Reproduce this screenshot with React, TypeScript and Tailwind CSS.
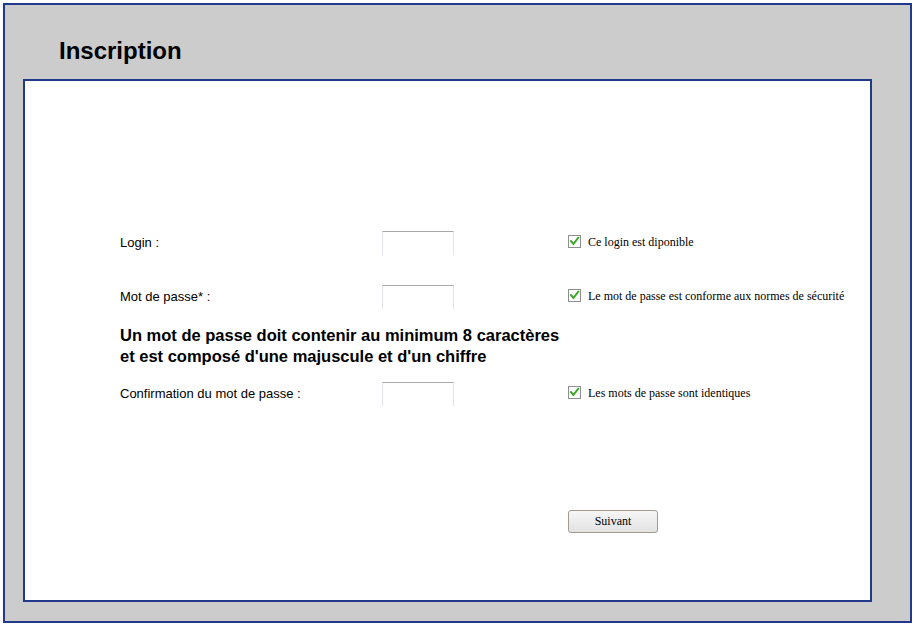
import React from 'react';

const sans = { fontFamily: '"Liberation Sans", Arial, sans-serif' };
const serif = { fontFamily: '"Liberation Serif", "Times New Roman", serif' };

function Check() {
  return (
    <svg width="13" height="13" viewBox="0 0 13 13" className="shrink-0">
      <rect x="0.5" y="0.5" width="12" height="12" fill="#fbfbfb" stroke="#8e8f8f" />
      <path d="M3 6.2 L5.4 9 L10.2 2.8" fill="none" stroke="#3aa826" strokeWidth="2" strokeLinecap="square" />
    </svg>
  );
}

function Field() {
  return <div className="h-[24px] w-[72px] border-x border-t border-x-[#e2e3ea] border-t-[#a9a9a9] bg-white" />;
}

function Row({ label, status }: { label: string; status: string }) {
  return (
    <div className="grid grid-cols-[262px_186px_1fr] items-center">
      <span className="text-[13px] text-black" style={sans}>{label}</span>
      <Field />
      <div className="flex items-center gap-[7px] -mt-[3px]">
        <Check />
        <span className="text-[12px] text-black" style={serif}>{status}</span>
      </div>
    </div>
  );
}

export default function App() {
  return (
    <div className="p-[3px]">
      <div className="w-[909px] h-[620px] border-2 border-[#22388a] bg-[#cccccc] pl-[18px]">
        <h1 className="pl-[36px] pt-[32px] pb-[14px] text-[24px] leading-[28px] font-bold text-black" style={sans}>
          Inscription
        </h1>
        <div className="w-[849px] h-[523px] border-2 border-[#22388a] bg-white pl-[95px] pt-[150px]">
          <Row label="Login :" status="Ce login est diponible" />
          <div className="mt-[30px]">
            <Row label="Mot de passe* :" status="Le mot de passe est conforme aux normes de sécurité" />
          </div>
          <p className="mt-[16px] text-[16.5px] leading-[21px] font-bold text-black" style={sans}>
            Un mot de passe doit contenir au minimum 8 caractères
            <br />
            et est composé d'une majuscule et d'un chiffre
          </p>
          <div className="mt-[15px]">
            <Row label="Confirmation du mot de passe :" status="Les mots de passe sont identiques" />
          </div>
          <div className="mt-[101px] pl-[448px]">
            <button
              className="h-[23px] w-[90px] rounded-[3px] border border-[#a39a8f] bg-gradient-to-b from-[#f6f6f6] to-[#e3e3e3] text-[12px] text-black"
              style={serif}
            >
              Suivant
            </button>
          </div>
        </div>
      </div>
    </div>
  );
}
